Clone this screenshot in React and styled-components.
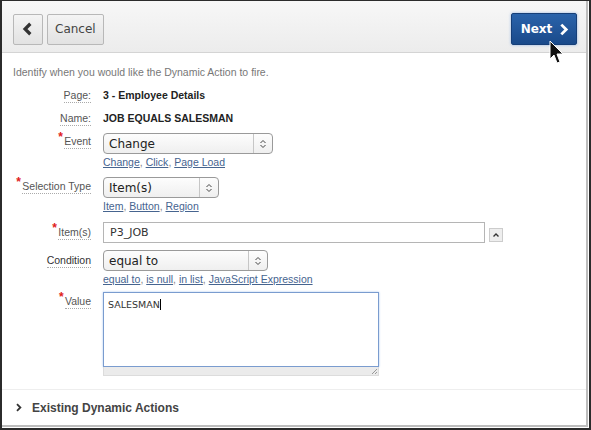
import styled, { createGlobalStyle } from "styled-components";

const Global = createGlobalStyle`
  html, body { margin: 0; padding: 0; background: #fff; }
  body { width: 591px; height: 430px; overflow: hidden; }
`;

const Frame = styled.div`
  box-sizing: border-box;
  width: 591px;
  height: 430px;
  border: 1px solid #2b2b2b;
  border-width: 1px 2px 2px 2px;
  background: #fff;
  display: flex;
  flex-direction: column;
`;

const Dialog = styled.div`
  flex: 1;
  display: flex;
  flex-direction: column;
  border-right: 2px solid #bdbdbd;
  border-bottom: 2px solid #bdbdbd;
  margin-right: 1px;
  margin-bottom: 1px;
`;

const Header = styled.div`
  height: 52px;
  box-sizing: border-box;
  display: flex;
  align-items: center;
  padding: 0 9px 0 11px;
  gap: 4px;
  background: linear-gradient(#f7f7f7, #ececec);
  border-bottom: 1px solid #d4d4d4;
`;

const Button = styled.button`
  height: 31px;
  box-sizing: border-box;
  border: 1px solid #b8b8b8;
  border-radius: 2px;
  background: linear-gradient(#f4f4f4, #e2e2e2);
  font-family: "DejaVu Sans", sans-serif;
  font-size: 12px;
  color: #444;
  padding: 0 7px;
  display: flex;
  align-items: center;
  gap: 6px;
  margin-top: 5px;
  svg {
    flex-shrink: 0;
  }
`;

const IconButton = styled(Button)`
  width: 30px;
  padding: 0;
  justify-content: center;
`;

const PrimaryButton = styled(Button)`
  margin-left: auto;
  height: 32px;
  width: 66px;
  border-color: #163f78;
  background: linear-gradient(#2a63ab, #1a4a8a);
  color: #fff;
  font-weight: bold;
  font-size: 12px;
  justify-content: center;
  gap: 5px;
  padding-left: 10px;
  box-shadow: 0 0 3px rgba(80, 140, 220, 0.6);
`;

const Body = styled.div`
  flex: 1;
  padding: 13px 0 0 9px;
  font-family: "Liberation Sans", Arial, sans-serif;
  font-size: 11px;
`;

const Intro = styled.div`
  color: #777;
  font-size: 10.5px;
  margin: 0 0 11px 2px;
`;

const Row = styled.div`
  display: grid;
  grid-template-columns: 80px 1fr;
  column-gap: 12px;
  margin-bottom: ${(p) => p.$mb || 0}px;
`;

const Label = styled.div`
  text-align: right;
  padding-top: ${(p) => p.$pt || 0}px;
  color: #555;
  font-size: 10.5px;
`;

const LabelText = styled.span`
  position: relative;
  border-bottom: 1px dotted #aaa;
  padding-bottom: 1px;
  color: ${(p) => (p.$dark ? "#333" : "#555")};
`;

const Req = styled.span`
  position: absolute;
  left: -6px;
  top: -5px;
  color: #e0201a;
  font-size: 12px;
  font-weight: bold;
`;

const Value = styled.div`
  font-weight: bold;
  color: #222;
  font-size: 10.5px;
`;

const Select = styled.div`
  width: ${(p) => p.$w}px;
  height: 21px;
  box-sizing: border-box;
  border: 1px solid #9a9a9a;
  border-radius: 4px;
  background: linear-gradient(#fdfdfd, #efefef);
  display: flex;
  align-items: center;
  font-family: "DejaVu Sans", sans-serif;
  font-size: 12px;
  color: #222;
`;

const SelectText = styled.span`
  flex: 1;
  padding-left: 5px;
`;

const SelectArrow = styled.span`
  width: 18px;
  height: 100%;
  border-left: 1px solid #c6c6c6;
  display: flex;
  align-items: center;
  justify-content: center;
`;

const Links = styled.div`
  margin-top: 2px;
  line-height: 13px;
  color: #888;
  font-size: 10.5px;
  a {
    color: #46648f;
    text-decoration: underline;
  }
`;

const InputRow = styled.div`
  display: flex;
  align-items: center;
  gap: 4px;
`;

const TextInput = styled.div`
  width: 382px;
  height: 21px;
  box-sizing: border-box;
  border: 1px solid #b5b5b5;
  font-family: "DejaVu Sans", sans-serif;
  font-size: 11px;
  color: #333;
  display: flex;
  align-items: center;
  padding-left: 6px;
`;

const SmallBtn = styled.div`
  width: 12px;
  height: 12px;
  margin-top: 4px;
  border: 1px solid #ccc;
  background: #eee;
  display: flex;
  align-items: center;
  justify-content: center;
`;

const TextArea = styled.div`
  width: 276px;
  height: 75px;
  box-sizing: border-box;
  border: 1px solid #7a9ccf;
  box-shadow: 0 0 2px #a8c6f0;
  font-family: "DejaVu Sans", sans-serif;
  font-size: 9.5px;
  color: #333;
  padding: 6px 4px;
`;

const Caret = styled.span`
  border-right: 1px solid #000;
`;

const Resize = styled.div`
  width: 276px;
  height: 9px;
  box-sizing: border-box;
  background: #ebebeb;
  border: 1px solid #dcdcdc;
  border-top: none;
  display: flex;
  justify-content: flex-end;
  align-items: flex-end;
`;

const Footer = styled.div`
  height: 35px;
  margin-top: auto;
  border-top: 1px solid #eee;
  display: flex;
  align-items: center;
  padding-left: 12px;
  gap: 9px;
  font-family: "Liberation Sans", Arial, sans-serif;
  font-weight: bold;
  font-size: 12px;
  color: #444;
`;

const Chevron = ({ color = "#333", dir = "left", size = 12, w = 2.6 }) => (
  <svg width={size} height={size} viewBox="0 0 12 12">
    <path
      d={dir === "left" ? "M8 1.5 L3.5 6 L8 10.5" : "M4 1.5 L8.5 6 L4 10.5"}
      fill="none"
      stroke={color}
      strokeWidth={w}
    />
  </svg>
);

const Updown = () => (
  <svg width="8" height="10" viewBox="0 0 8 10">
    <path d="M1.5 4 L4 1.5 L6.5 4 M1.5 6 L4 8.5 L6.5 6" fill="none" stroke="#444" strokeWidth="1" />
  </svg>
);

const Cursor = styled.svg`
  position: absolute;
  left: 549px;
  top: 40px;
`;

function Field({ label, req, pt, dark, mb, children }) {
  return (
    <Row $mb={mb}>
      <Label $pt={pt}>
        <LabelText $dark={dark}>
          {req && <Req>*</Req>}
          {label}
        </LabelText>
      </Label>
      <div>{children}</div>
    </Row>
  );
}

export default function App() {
  return (
    <>
      <Global />
      <Frame>
        <Dialog>
          <Header>
            <IconButton>
              <Chevron size={14} w={2.8} />
            </IconButton>
            <Button>Cancel</Button>
            <PrimaryButton>
              Next <Chevron color="#fff" dir="right" size={13} w={2.6} />
            </PrimaryButton>
          </Header>
          <Body>
            <Intro>Identify when you would like the Dynamic Action to fire.</Intro>
            <Field label="Page:" mb={11}>
              <Value>3 - Employee Details</Value>
            </Field>
            <Field label="Name:" mb={9}>
              <Value>JOB EQUALS SALESMAN</Value>
            </Field>
            <Field label="Event" req pt={2} mb={8}>
              <Select $w={170}>
                <SelectText>Change</SelectText>
                <SelectArrow>
                  <Updown />
                </SelectArrow>
              </Select>
              <Links>
                <a>Change</a>, <a>Click</a>, <a>Page Load</a>
              </Links>
            </Field>
            <Field label="Selection Type" req pt={3} mb={9}>
              <Select $w={116}>
                <SelectText>Item(s)</SelectText>
                <SelectArrow>
                  <Updown />
                </SelectArrow>
              </Select>
              <Links>
                <a>Item</a>, <a>Button</a>, <a>Region</a>
              </Links>
            </Field>
            <Field label="Item(s)" req pt={4} mb={7}>
              <InputRow>
                <TextInput>P3_JOB</TextInput>
                <SmallBtn>
                  <svg width="8" height="6" viewBox="0 0 8 6">
                    <path d="M1.5 4.5 L4 2 L6.5 4.5" fill="none" stroke="#333" strokeWidth="1.4" />
                  </svg>
                </SmallBtn>
              </InputRow>
            </Field>
            <Field label="Condition" dark pt={4} mb={6}>
              <Select $w={165}>
                <SelectText>equal to</SelectText>
                <SelectArrow>
                  <Updown />
                </SelectArrow>
              </Select>
              <Links>
                <a>equal to</a>, <a>is null</a>, <a>in list</a>, <a>JavaScript Expression</a>
              </Links>
            </Field>
            <Field label="Value" req pt={3}>
              <TextArea>
                <Caret>SALESMAN</Caret>
              </TextArea>
              <Resize>
                <svg width="7" height="7" viewBox="0 0 7 7">
                  <path d="M6 1 L1 6 M6 4 L4 6" stroke="#999" strokeWidth="1" />
                </svg>
              </Resize>
            </Field>
          </Body>
          <Footer>
            <Chevron dir="right" size={9} w={2.4} />
            Existing Dynamic Actions
          </Footer>
        </Dialog>
      </Frame>
      <Cursor width="16" height="26" viewBox="0 0 16 26">
        <path d="M1 1 L1 19 L5 15 L8 23 L11 22 L8 14 L14 14 Z" fill="#111" stroke="#fff" strokeWidth="1" />
      </Cursor>
    </>
  );
}
